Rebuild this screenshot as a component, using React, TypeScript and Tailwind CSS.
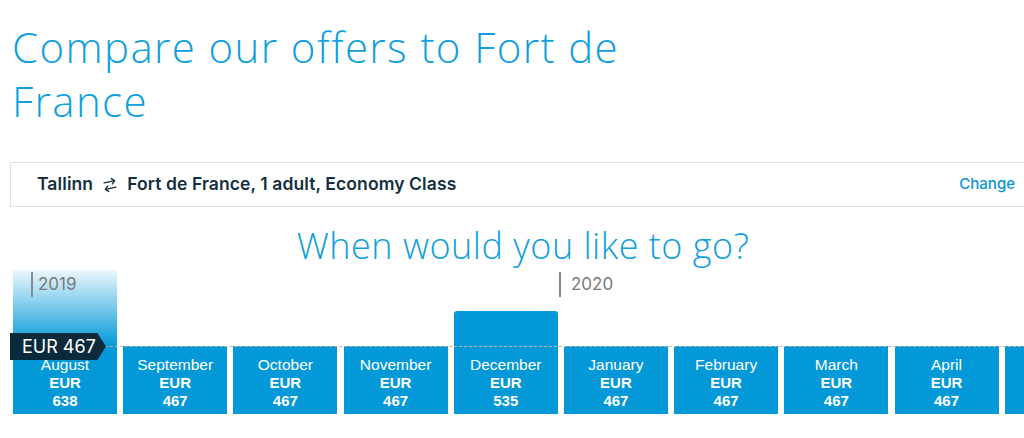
import { ArrowRightLeft } from 'lucide-react'

type Month = { name: string; price: number; tall?: boolean; selected?: boolean; partial?: boolean }

const MONTHS: Month[] = [
  { name: 'August', price: 638, selected: true },
  { name: 'September', price: 467 },
  { name: 'October', price: 467 },
  { name: 'November', price: 467 },
  { name: 'December', price: 535, tall: true },
  { name: 'January', price: 467 },
  { name: 'February', price: 467 },
  { name: 'March', price: 467 },
  { name: 'April', price: 467 },
  { name: 'May', price: 467, partial: true },
]

function MonthBar({ m }: { m: Month }) {
  let cls = 'h-[68px] bg-[#0399d8]'
  if (m.tall) cls = 'h-[103px] bg-[#0399d8] rounded-t-[3px]'
  if (m.selected)
    cls = 'h-[144px] bg-[linear-gradient(to_bottom,#ecf7fd_0px,#0399d8_76px,#0399d8_100%)]'

  return (
    <div
      className={`${cls} w-[104px] shrink-0 flex flex-col justify-end items-center pb-[4px] text-white text-center`}
      style={{ fontFamily: '"Liberation Sans", Arial, sans-serif' }}
    >
      {!m.partial && (
        <>
          <div className="text-[15.5px] leading-[19px]">{m.name}</div>
          <div className="text-[15px] leading-[18px] font-bold">EUR</div>
          <div className="text-[15px] leading-[18px] font-bold">{m.price}</div>
        </>
      )}
    </div>
  )
}

export default function App() {
  return (
    <div className="w-full h-[438px] overflow-hidden bg-white">
      <div className="w-[1036px] pl-[10px]">
        <h1
          className="w-[660px] pt-[20px] text-[42px] leading-[54px] tracking-[1.4px] font-light text-[#0fa0dd] pl-[2px]"
          style={{ fontFamily: '"Open Sans", sans-serif' }}
        >
          Compare our offers to Fort de France
        </h1>

        <div className="mt-[34px] h-[45px] border border-[#e1e1e1] flex items-center justify-between pl-[26px] pr-[20px]">
          <div
            className="flex items-center text-[17.5px] tracking-[0.1px] font-semibold text-[#14303f]"
            style={{ fontFamily: 'Inter, sans-serif' }}
          >
            <span>Tallinn</span>
            <ArrowRightLeft className="mx-[9px] w-[16px] h-[16px] -rotate-12" strokeWidth={2.2} />
            <span>Fort de France, 1 adult, Economy Class</span>
          </div>
          <a
            className="text-[15px] text-[#0a93d6] font-medium"
            style={{ fontFamily: 'Inter, sans-serif' }}
          >
            Change
          </a>
        </div>

        <h2
          className="mt-[18px] text-center text-[36px] leading-[42px] tracking-[0.5px] font-light text-[#0fa0dd]"
          style={{ fontFamily: '"Open Sans", sans-serif' }}
        >
          When would you like to go?
        </h2>

        <div className="relative mt-[3px] h-[144px]">
          <div className="flex items-end gap-[6.2px] h-full pl-[3px]">
            {MONTHS.map((m) => (
              <MonthBar key={m.name} m={m} />
            ))}
          </div>

          {/* year markers */}
          <div
            className="absolute left-[21px] top-[2px] flex items-center gap-[5px] text-[17px] text-[#7a7a7a]"
            style={{ fontFamily: 'Inter, sans-serif' }}
          >
            <span className="w-[2px] h-[25px] bg-[#8a8a8a]" />
            <span>2019</span>
          </div>
          <div
            className="absolute left-[549px] top-[2px] flex items-center gap-[10px] text-[17px] text-[#7a7a7a]"
            style={{ fontFamily: 'Inter, sans-serif' }}
          >
            <span className="w-[2px] h-[25px] bg-[#8a8a8a]" />
            <span>2020</span>
          </div>

          {/* price level line */}
          <div className="absolute left-0 right-0 top-[76px] border-t border-dashed border-[#bfb4ab]" />

          {/* price tag */}
          <div
            className="absolute left-0 top-[63px] h-[27px] w-[96px] bg-[#0b2a3c] text-white text-[18px] leading-[27px] pl-[12px] [clip-path:polygon(0_0,91%_0,100%_50%,91%_100%,0_100%)]"
            style={{ fontFamily: 'Inter, sans-serif' }}
          >
            EUR 467
          </div>
        </div>
      </div>
    </div>
  )
}
